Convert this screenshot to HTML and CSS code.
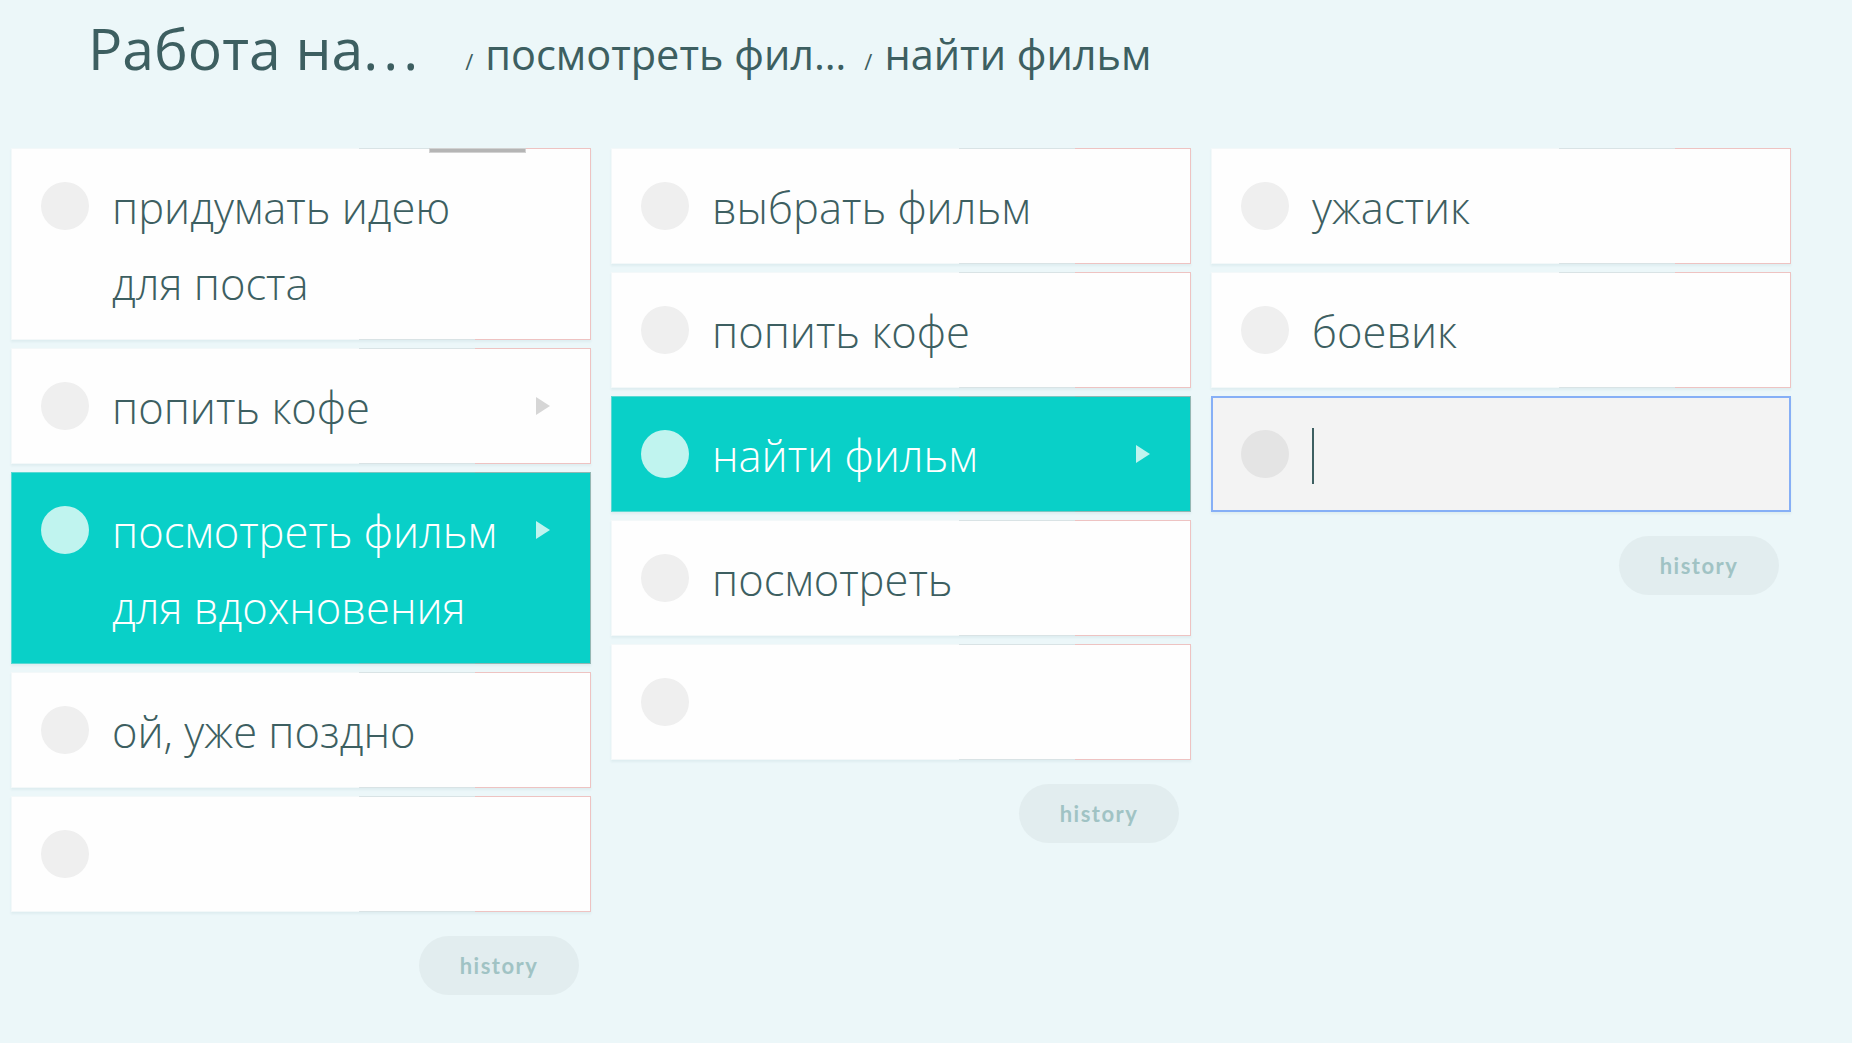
FILE: index.html
```html
<!DOCTYPE html>
<html lang="ru">
<head>
    <meta charset="UTF-8">
    <title>Работа на...</title>
    <link rel="stylesheet" href="styles.css">
</head>
<body>
    <div class="header">
        <h1 class="title">Работа на<span class="dots">...</span></h1>
        <span class="sep">/</span>
        <span class="crumb">посмотреть фил…</span>
        <span class="sep">/</span>
        <span class="crumb">найти фильм</span>
    </div>

    <div class="board">
        <div class="column">
            <div class="task">
                <div class="handle"></div>
                <span class="dot"></span>
                <span class="text">придумать идею<br>для поста</span>
            </div>
            <div class="task">
                <span class="dot"></span>
                <span class="text">попить кофе</span>
                <span class="arrow"></span>
            </div>
            <div class="task active">
                <span class="dot"></span>
                <span class="text">посмотреть фильм<br>для вдохновения</span>
                <span class="arrow"></span>
            </div>
            <div class="task">
                <span class="dot"></span>
                <span class="text">ой, уже поздно</span>
            </div>
            <div class="task">
                <span class="dot"></span>
                <span class="text"></span>
            </div>
            <button class="history">history</button>
        </div>

        <div class="column">
            <div class="task">
                <span class="dot"></span>
                <span class="text">выбрать фильм</span>
            </div>
            <div class="task">
                <span class="dot"></span>
                <span class="text">попить кофе</span>
            </div>
            <div class="task active">
                <span class="dot"></span>
                <span class="text">найти фильм</span>
                <span class="arrow"></span>
            </div>
            <div class="task">
                <span class="dot"></span>
                <span class="text">посмотреть</span>
            </div>
            <div class="task">
                <span class="dot"></span>
                <span class="text"></span>
            </div>
            <button class="history">history</button>
        </div>

        <div class="column">
            <div class="task">
                <span class="dot"></span>
                <span class="text">ужастик</span>
            </div>
            <div class="task">
                <span class="dot"></span>
                <span class="text">боевик</span>
            </div>
            <div class="task editing">
                <span class="dot"></span>
                <span class="text"><span class="caret"></span></span>
            </div>
            <button class="history">history</button>
        </div>
    </div>
</body>
</html>
```

FILE: styles.css
```css
body {
    margin: 0;
    padding: 0;
    background: #ecf7f9;
    color: #3d5f61;
    font-family: "Open Sans", sans-serif;
}
.header {
    display: flex;
    align-items: baseline;
    height: 148px;
    padding-left: 88px;
    box-sizing: border-box;
}
.title {
    margin: 0;
    font-size: 57px;
    font-weight: 400;
    line-height: 96px;
    white-space: nowrap;
}
.dots {
    letter-spacing: 5px;
}
.sep {
    font-size: 22px;
    margin: 0 12px 0 42px;
}
.sep + .crumb + .sep {
    margin-left: 18px;
}
.crumb {
    font-size: 41.5px;
    white-space: nowrap;
}
.board {
    display: flex;
    gap: 20px;
    padding-left: 11px;
    align-items: flex-start;
}
.column {
    width: 580px;
    display: flex;
    flex-direction: column;
    gap: 8px;
}
.task {
    position: relative;
    display: flex;
    align-items: flex-start;
    padding: 19px 40px 17px 29px;
    background: #fefefe;
    border: 1px solid transparent;
    border-image: linear-gradient(to right, #f3f8f9 0%, #f3f8f9 60%, #d9e3e5 60%, #d9e3e5 80%, #eec3c2 80%, #eec3c2 100%) 1;
    box-shadow: 0 2px 2px rgba(90, 140, 150, 0.09);
}
.dot {
    flex: none;
    width: 48px;
    height: 48px;
    margin-top: 14px;
    margin-right: 23px;
    border-radius: 50%;
    background: #efefef;
}
.text {
    flex: 1;
    padding-top: 2px;
    font-size: 43.5px;
    font-weight: 300;
    line-height: 76px;
    min-height: 76px;
}
.arrow {
    flex: none;
    width: 0;
    height: 0;
    margin-top: 29px;
    border-top: 9px solid transparent;
    border-bottom: 9px solid transparent;
    border-left: 14px solid #d6d6d6;
}
.task.active {
    background: #09d0c8;
    color: #ffffff;
    border-image: linear-gradient(to right, #5ad9d3 0%, #5ad9d3 60%, #7cc6c1 60%, #7cc6c1 80%, #93b7b3 80%, #93b7b3 100%) 1;
}
.task.active .dot {
    background: #c0f4ef;
}
.task.active .arrow {
    border-left-color: #c0f4ef;
}
.task.editing {
    background: #f3f3f3;
    border: 2px solid #86aff6;
    border-image: none;
    padding: 18px 39px 16px 28px;
}
.task.editing .dot {
    background: #e4e4e4;
}
.caret {
    display: inline-block;
    width: 2px;
    height: 56px;
    margin-top: 10px;
    vertical-align: top;
    background: #3d5f61;
}
.handle {
    position: absolute;
    top: -1px;
    left: 417px;
    width: 95px;
    height: 3px;
    background: #b5b5b5;
    border: 1px solid #d2d2d2;
}
.history {
    align-self: flex-end;
    margin: 16px 12px 0 0;
    width: 160px;
    height: 59px;
    border: none;
    border-radius: 30px;
    background: #e2edef;
    color: #a0c3c4;
    font-family: Lato, sans-serif;
    font-size: 22px;
    font-weight: 700;
    letter-spacing: 1.5px;
    cursor: pointer;
}
```
